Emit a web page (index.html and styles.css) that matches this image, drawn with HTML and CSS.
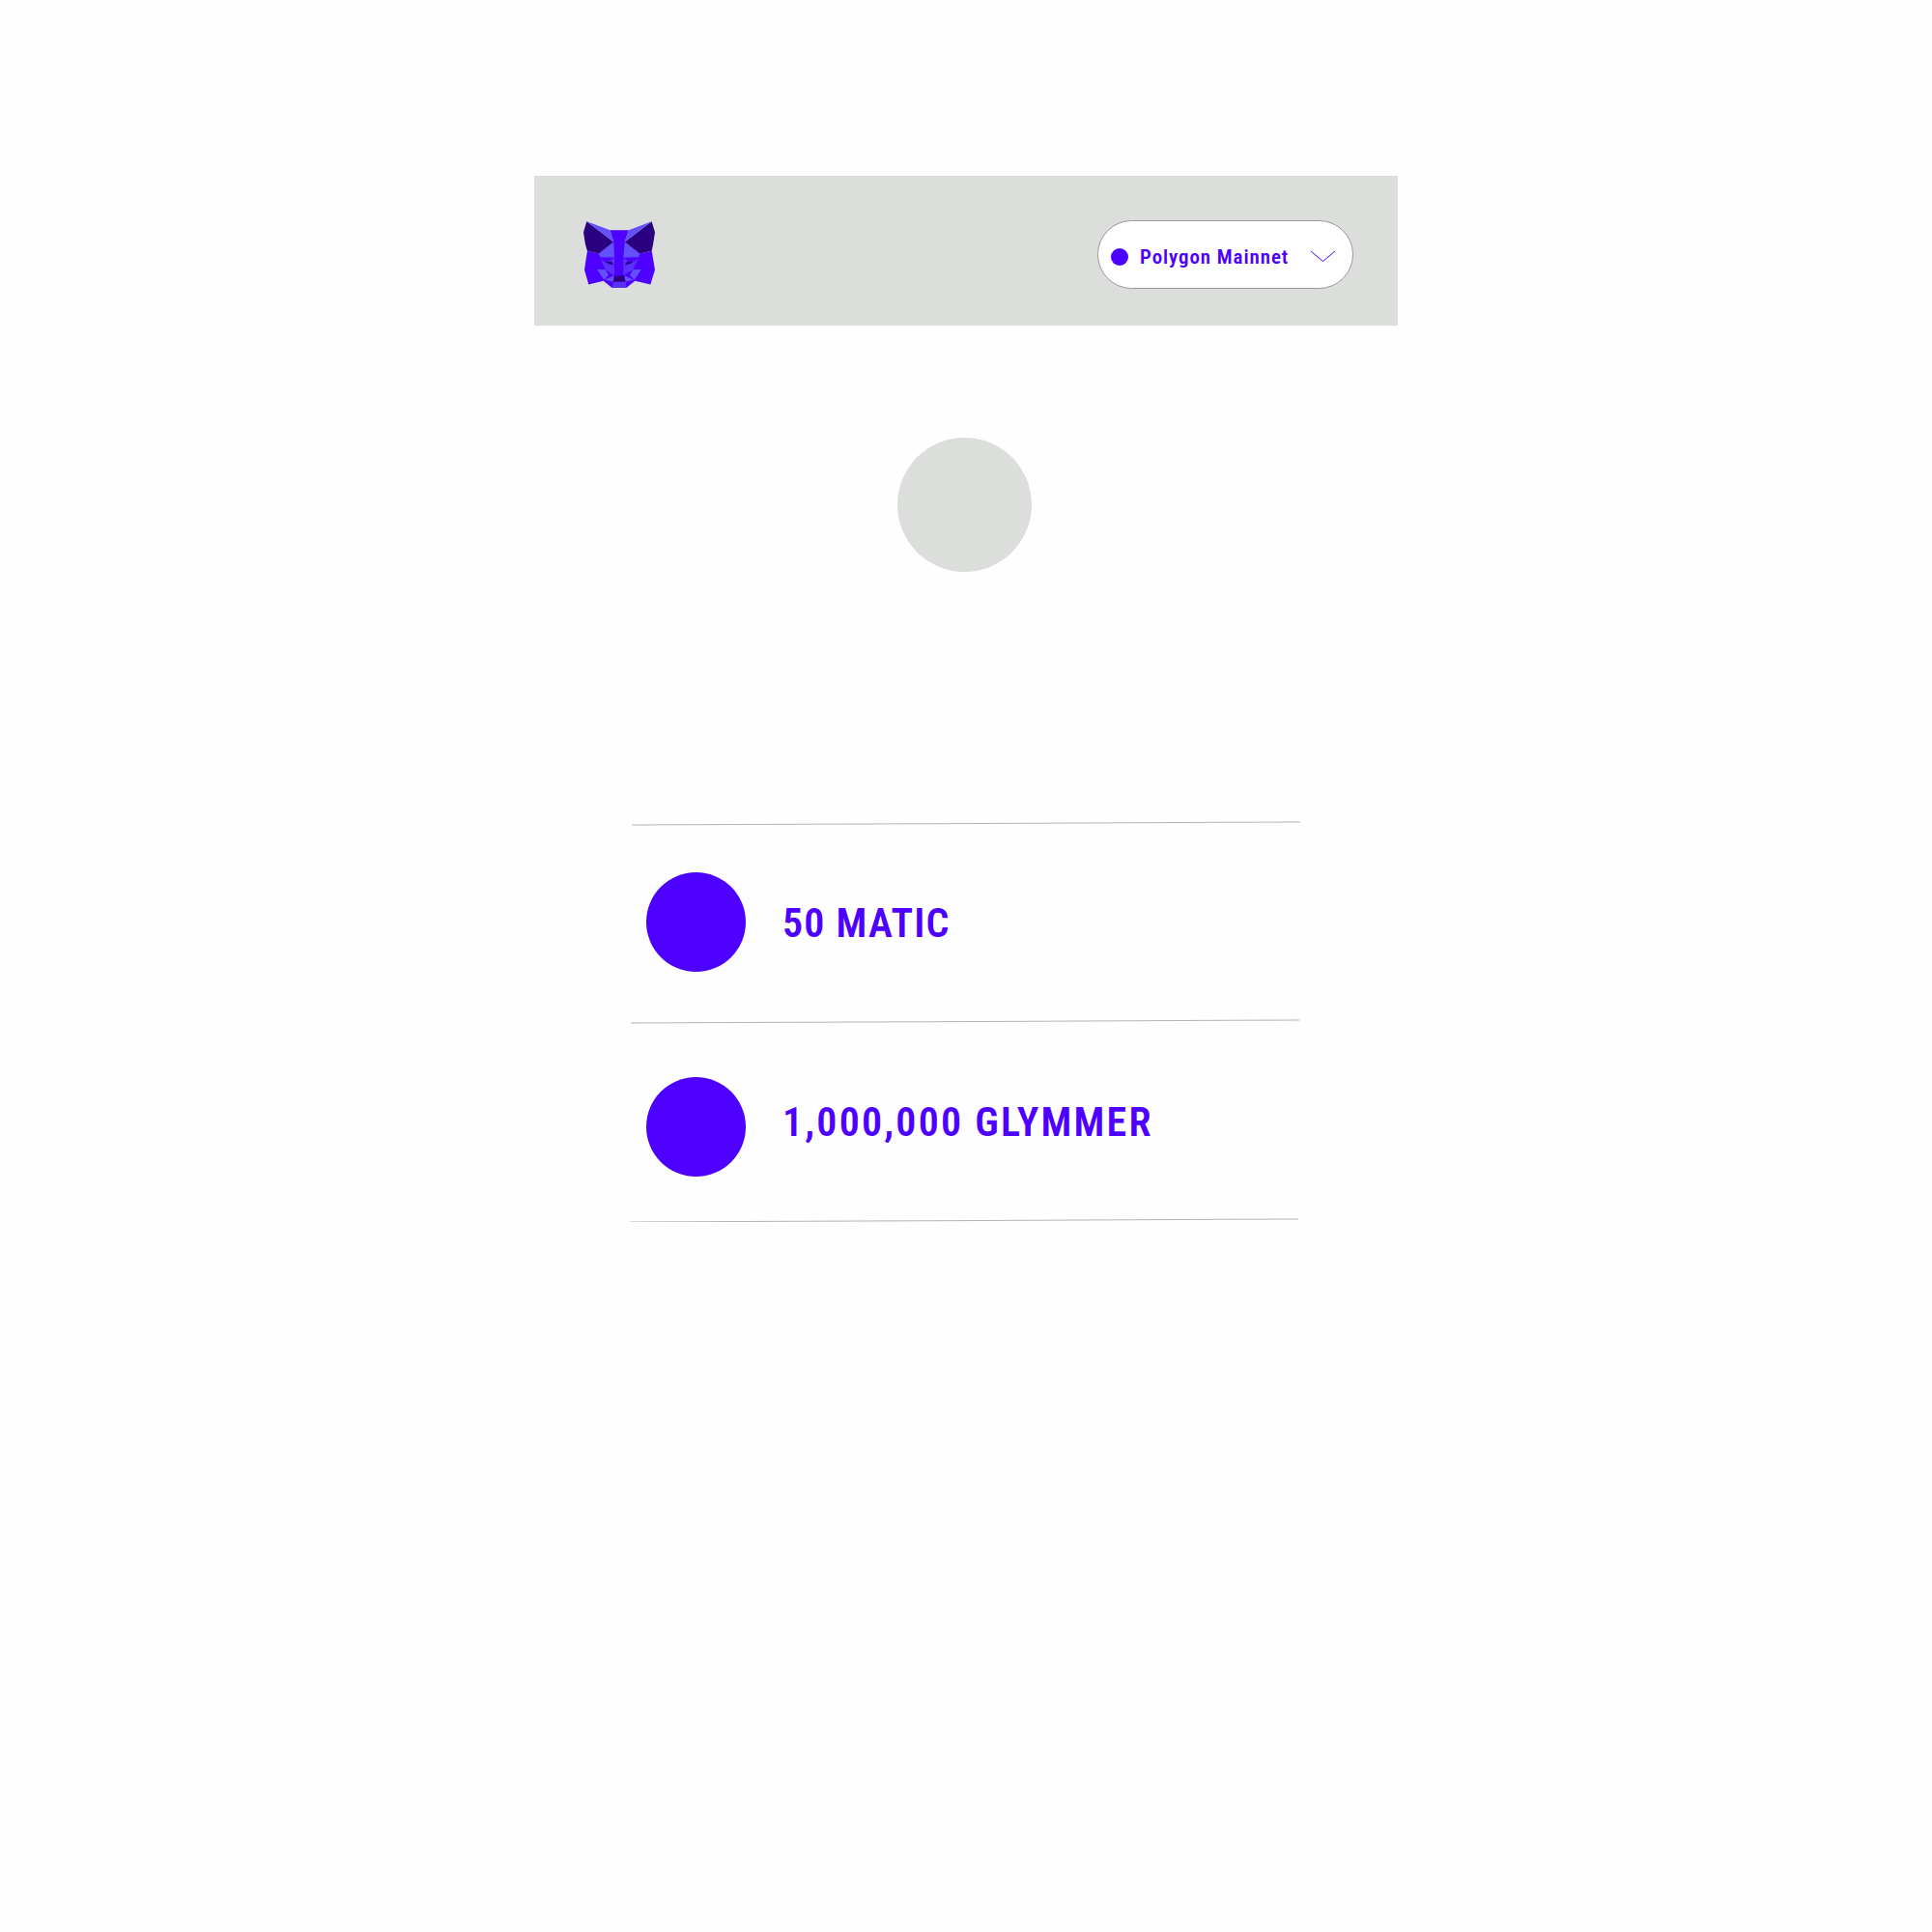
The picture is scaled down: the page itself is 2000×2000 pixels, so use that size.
FILE: index.html
```html
<!DOCTYPE html>
<html lang="en">
<head>
  <meta charset="UTF-8">
  <title>Wallet</title>
  <link rel="stylesheet" href="styles.css">
</head>
<body>
  <div class="container">
    <div class="header">
      <svg class="logo" viewBox="72 58 222 206">
        <polygon fill="#4d00ff" points="84,150 120,158 166,122 200,122 246,158 284,150 294,208 280,254 232,243 206,264 160,264 134,243 88,254 75,208"/>
        <polygon fill="#2a0080" points="82,58 166,122 120,158 84,150 78,130 72,92"/>
        <polygon fill="#2a0080" points="284,58 200,122 246,158 284,150 288,130 294,92"/>
        <polygon fill="#6450fa" points="82,58 155,85 166,122"/>
        <polygon fill="#6450fa" points="284,58 212,85 200,122"/>
        <polygon fill="#4d00ff" points="155,85 212,85 200,122 196,170 168,170 166,122"/>
        <polygon fill="#6450fa" points="166,122 168,170 124,170 120,158"/>
        <polygon fill="#6450fa" points="200,122 196,170 244,170 246,158"/>
        <polygon fill="#5a30ff" points="124,170 168,170 168,226 140,208"/>
        <polygon fill="#5a30ff" points="244,170 196,170 196,226 226,208"/>
        <polygon fill="#4d00ff" points="124,170 168,172 150,182 138,184"/>
        <polygon fill="#4d00ff" points="244,170 196,172 214,182 228,184"/>
        <polygon fill="#2a0080" points="140,184 158,182 166,194 150,190"/>
        <polygon fill="#2a0080" points="226,184 208,182 200,194 216,190"/>
        <polygon fill="#6450fa" points="114,207 140,208 150,225 136,240"/>
        <polygon fill="#6450fa" points="252,207 226,208 216,225 230,240"/>
        <polygon fill="#6450fa" points="138,240 166,226 164,246"/>
        <polygon fill="#6450fa" points="228,240 200,226 202,246"/>
        <polygon fill="#2a0080" points="170,226 197,226 203,246 165,246"/>
        <polygon fill="#5a30ff" points="165,246 203,246 206,264 160,264"/>
      </svg>
      <div class="network">
        <span class="network-dot"></span>
        <span class="network-name">Polygon Mainnet</span>
        <svg class="chevron" viewBox="0 0 25 11"><polyline points="0,0 12.5,10.5 25,0"/></svg>
      </div>
    </div>

    <div class="avatar"></div>

    <div class="token-list">
      <div class="rule"></div>
      <div class="token">
        <span class="token-icon"></span>
        <span class="token-amount">50 MATIC</span>
      </div>
      <div class="rule rule-second"></div>
      <div class="token token-second">
        <span class="token-icon"></span>
        <span class="token-amount">1,000,000 GLYMMER</span>
      </div>
      <div class="rule rule-third"></div>
    </div>
  </div>
</body>
</html>
```

FILE: styles.css
```css
body {
  margin: 0;
  background-color: #fefefe;
  font-family: Roboto, "Liberation Sans", sans-serif;
  font-stretch: 80%;
  color: #4d00ff;
}

.container {
  width: 894px;
  margin: 0 auto;
  padding-top: 182px;
}

.header {
  height: 155px;
  box-sizing: border-box;
  padding: 46px 46px 0 51px;
  background-color: #dcdedc;
  display: flex;
  justify-content: space-between;
  align-items: flex-start;
}

.logo {
  width: 74px;
  height: 69px;
  margin-top: 1px;
}

.network {
  width: 265px;
  height: 71px;
  box-sizing: border-box;
  padding: 0 18px 0 13px;
  background-color: #fff;
  border: 1px solid #999;
  border-radius: 36px;
  display: flex;
  align-items: center;
}

.network-dot {
  flex: none;
  width: 18px;
  height: 18px;
  margin-top: 5px;
  border-radius: 50%;
  background-color: #4d00ff;
}

.network-name {
  margin: 5px 0 0 12px;
  font-size: 21px;
  font-weight: 600;
  letter-spacing: 0.9px;
  white-space: nowrap;
}

.chevron {
  flex: none;
  width: 25px;
  height: 11px;
  margin-left: auto;
  margin-top: 4px;
  fill: none;
  stroke: #4d00ff;
  stroke-width: 1;
}

.avatar {
  width: 139px;
  height: 139px;
  margin: 116px 0 0 376px;
  border-radius: 50%;
  background-color: #dcdedc;
}

.token-list {
  width: 692px;
  margin: 259.5px 0 0 101px;
}

.rule {
  width: 692px;
  height: 1.2px;
  background-color: #b4b4b4;
  transform: rotate(-0.25deg);
}

.rule-second {
  margin-left: -1px;
}

.rule-third {
  margin-left: -2px;
}

.token {
  height: 204.5px;
  padding-left: 15px;
  display: flex;
  align-items: flex-start;
}

.token-icon {
  flex: none;
  width: 103px;
  height: 103px;
  margin-top: 50px;
  border-radius: 50%;
  background-color: #4d00ff;
}

.token-amount {
  margin: 78px 0 0 38px;
  font-size: 42px;
  font-weight: 600;
  letter-spacing: 1.2px;
  white-space: nowrap;
}

.token-second {
  height: 205px;
}

.token-second .token-icon {
  margin-top: 57px;
}

.token-second .token-amount {
  margin-top: 79px;
  letter-spacing: 2.2px;
}
```
